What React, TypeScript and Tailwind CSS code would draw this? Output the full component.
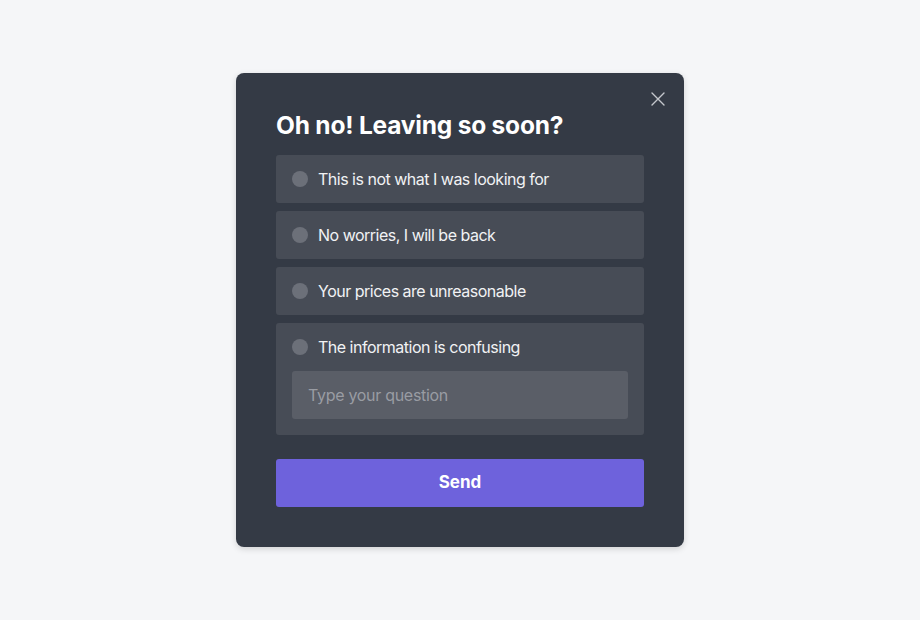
import React, { useState } from 'react';

const reasons = [
  'This is not what I was looking for',
  'No worries, I will be back',
  'Your prices are unreasonable',
  'The information is confusing',
];

const App: React.FC = () => {
  const [question, setQuestion] = useState('');

  return (
    <div
      className="w-[920px] h-[620px] bg-[#f5f6f8] flex items-center justify-center"
      style={{ fontFamily: 'Inter, "Noto Sans", sans-serif' }}
    >
      <div className="relative w-[448px] bg-[#343a45] rounded-lg shadow-[0_2px_6px_rgba(0,0,0,0.15)] px-10 pt-[36px] pb-10">
        <button className="absolute right-[15px] top-[15px] p-1 text-[#c4c7cc]" title="Close">
          <svg width="14" height="14" viewBox="0 0 14 14" fill="none">
            <path d="M1 1L13 13M13 1L1 13" stroke="currentColor" strokeWidth="1.4" strokeLinecap="round" />
          </svg>
        </button>

        <h2 className="text-[24.5px] leading-8 font-bold text-white tracking-[-0.2px] mb-[14px]">
          Oh no! Leaving so soon?
        </h2>

        <div className="flex flex-col gap-2">
          {reasons.map((reason, i) => (
            <div key={reason} className="bg-[#474c56] rounded-[3px]">
              <label className="h-12 flex items-center px-4 gap-[10px] cursor-pointer">
                <span className="w-4 h-4 rounded-full bg-[#6c7079]" />
                <span className="text-[16px] text-[#f1f2f4] tracking-[-0.5px]">{reason}</span>
              </label>
              {i === reasons.length - 1 && (
                <div className="px-4 pb-4">
                  <input
                    value={question}
                    onChange={(e) => setQuestion(e.target.value)}
                    placeholder="Type your question"
                    className="w-full h-12 px-4 bg-[#5a5e67] rounded-[3px] text-[16px] text-white placeholder:text-[#999ca3] outline-none tracking-[-0.3px]"
                  />
                </div>
              )}
            </div>
          ))}
        </div>

        <button className="mt-6 w-full h-12 rounded-[3px] bg-[#6e62dc] text-white text-[17px] font-bold">
          Send
        </button>
      </div>
    </div>
  );
};

export default App;
